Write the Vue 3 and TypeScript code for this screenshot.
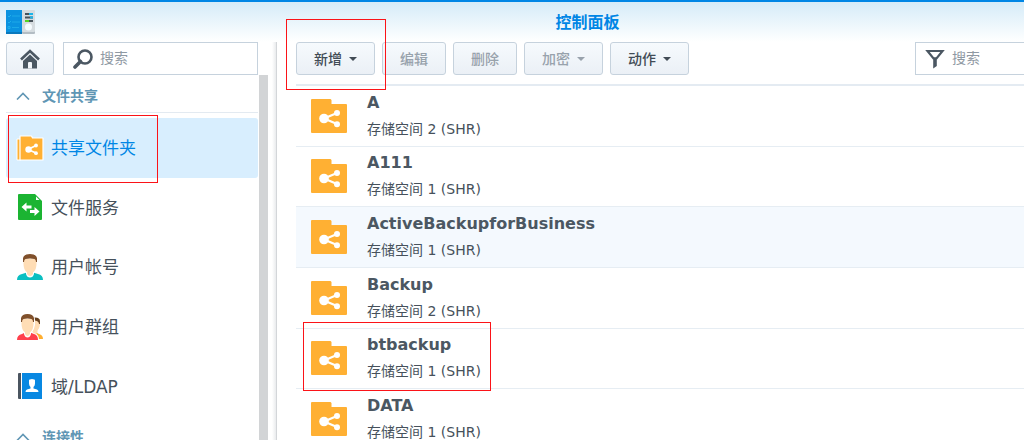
<script setup lang="ts">
import { ref } from 'vue'

interface NavItem {
  label: string
  icon: 'share' | 'file' | 'user' | 'group' | 'domain'
}

interface Folder {
  name: string
  volume: number
}

interface ToolButton {
  label: string
  menu: boolean
  disabled: boolean
}

const navItems: NavItem[] = [
  { label: '共享文件夹', icon: 'share' },
  { label: '文件服务', icon: 'file' },
  { label: '用户帐号', icon: 'user' },
  { label: '用户群组', icon: 'group' },
  { label: '域/LDAP', icon: 'domain' },
]

const buttons: ToolButton[] = [
  { label: '新增', menu: true, disabled: false },
  { label: '编辑', menu: false, disabled: true },
  { label: '删除', menu: false, disabled: true },
  { label: '加密', menu: true, disabled: true },
  { label: '动作', menu: true, disabled: false },
]

const folders: Folder[] = [
  { name: 'A', volume: 2 },
  { name: 'A111', volume: 1 },
  { name: 'ActiveBackupforBusiness', volume: 1 },
  { name: 'Backup', volume: 2 },
  { name: 'btbackup', volume: 1 },
  { name: 'DATA', volume: 1 },
]

const active = ref('共享文件夹')
const hovered = ref('ActiveBackupforBusiness')
const navQuery = ref('')
const listQuery = ref('')
</script>

<template>
  <div class="desktop">
    <div class="window">
      <header class="titlebar">
        <svg class="app-icon" viewBox="0 0 29 24" aria-hidden="true">
          <rect x="16" y="1" width="13" height="23" rx="1" fill="#b3bdc4" />
          <rect x="16" y="0" width="13" height="22" rx="1" fill="#d5dce0" />
          <rect x="0" y="1" width="16" height="23" fill="#0878bd" />
          <rect x="0" y="0" width="16" height="22" fill="#0a92e0" />
          <path d="M2 6l1 1 2-2M2 12l1 1 2-2M2 16.500h2v2h-2z" fill="none" stroke="#1eb0ec" stroke-width="1" />
          <path d="M6 6h8M6 12h8M6 17.500h7" stroke="#1ca9e8" stroke-width="1" />
          <path d="M19 4h8M19 7.500h8M19 11h8" stroke="#46525b" stroke-width="2" />
          <path d="M23 4h4M24 7.500h3" stroke="#18b4ea" stroke-width="2" />
          <path d="M19 11h4" stroke="#55d420" stroke-width="2" />
          <circle cx="22.500" cy="17" r="3.500" fill="#f4fbfe" />
        </svg>
        <h1>控制面板</h1>
      </header>

      <div class="body">
        <aside class="sidebar">
          <div class="side-tools">
            <button class="btn home" type="button" aria-label="主页">
              <svg viewBox="0 0 20 20" aria-hidden="true">
                <path d="M1 10.500L10 2l9 8.500" fill="none" stroke="#4b5762" stroke-width="2.600" />
                <path d="M10 5.500l7 6.500v7.500H3V12z" fill="#4b5762" />
                <path d="M8 19.500v-5.500q0-1 1-1h2q1 0 1 1v5.500z" fill="#f2f6fa" />
              </svg>
            </button>
            <label class="search">
              <svg viewBox="0 0 20 20" aria-hidden="true">
                <circle cx="12" cy="8" r="6.500" fill="none" stroke="#4b5762" stroke-width="2.600" />
                <path d="M7.500 12.500L2 18" stroke="#4b5762" stroke-width="3.600" stroke-linecap="round" />
              </svg>
              <input v-model="navQuery" type="text" placeholder="搜索" aria-label="搜索" />
            </label>
          </div>

          <div class="nav-scroll">
            <nav>
              <h2 class="section">
                <svg viewBox="0 0 14 8" aria-hidden="true"><path d="M1 7.500l6-6 6 6" /></svg>
                <span class="label">文件共享</span>
              </h2>
              <ul class="nav-list">
                <li v-for="item in navItems" :key="item.label">
                  <a href="#" :class="{ active: item.label === active }" @click.prevent="active = item.label">
                    <svg v-if="item.icon === 'share'" viewBox="0 0 28 28" aria-hidden="true">
                      <path d="M1 5h4v21H1z" fill="#ffb033" stroke="#fff" stroke-width="1" />
                      <path d="M4 2h11.500l1 2H27v22H4z" fill="#ffb033" stroke="#fff" stroke-width="1.200" stroke-linejoin="round" />
                      <path d="M20 11.500l-8 4 8 3.500" fill="none" stroke="#fff" stroke-width="1.800" />
                      <circle cx="12.500" cy="15.500" r="3.200" fill="#fff" />
                      <circle cx="20" cy="11.500" r="1.900" fill="#fff" />
                      <circle cx="20" cy="19.200" r="1.900" fill="#fff" />
                    </svg>
                    <svg v-else-if="item.icon === 'file'" viewBox="0 0 28 28" aria-hidden="true">
                      <path d="M3 1h16l7 7v18q0 1-1 1H3q-1 0-1-1V2q0-1 1-1z" fill="#1bb432" />
                      <path d="M20 3.500v3.500h3.500z" fill="#fff" />
                      <path d="M5.500 14l5-4.500v3h5v3h-5v3z" fill="#fff" />
                      <path d="M23.500 18.500l-5-4.500v3h-4.500v3h4.500v3z" fill="#fff" />
                    </svg>
                    <svg v-else-if="item.icon === 'user'" viewBox="0 0 28 28" aria-hidden="true">
                      <path d="M1 27q0-5 5-6l5-1.500h6l5 1.500q5 1 5 6z" fill="#0bbfc1" />
                      <path d="M10 18h8v3q-1 3.500-4 3.500T10 21z" fill="#fff" />
                      <path d="M11 17h6v4q-1 2-3 2t-3-2z" fill="#ffddb5" />
                      <path d="M7.500 6h13v5q0 5-3 8-3.500 2-7 0-3-3-3-8z" fill="#ffddb5" />
                      <path d="M7 9V5q1-4 7-4t7 4v4h-1q0-2.500-1.500-3-4.500-1-9 0Q8 6.500 8 9z" fill="#80502b" />
                    </svg>
                    <svg v-else-if="item.icon === 'group'" viewBox="0 0 28 28" aria-hidden="true">
                      <path d="M20 19.500l3 1.500q4 1 4 5h-5z" fill="#ffae30" />
                      <path d="M17 6h7v4q0 5-2.500 7.500v2l-2.500 2-3-3z" fill="#ffddb5" />
                      <path d="M18 4.500q6-.5 6 4V11h-1q0-3-4-3.500z" fill="#65401f" />
                      <path d="M5 7q0-6.500 7-6.500T19 7v5q-1 5-3 7.500l4 1.500q3 1 3 6" fill="#fff" />
                      <path d="M1 27q0-5 5-6l3-1.500h5l4 1.500q4 1 4 6z" fill="#ff404c" />
                      <path d="M8 18h7v3q-1 3.500-3.500 3.500T8 21z" fill="#fff" />
                      <path d="M9 17h5v4q-1 2-2.500 2T9 21z" fill="#ffddb5" />
                      <path d="M5.500 6h12v5q0 5-3 8-3 2-6 0-3-3-3-8z" fill="#ffddb5" />
                      <path d="M5 9V5q1-4 6.500-4T18 5v4h-1q0-2.500-1.500-3-4-1-8 0Q6 6.500 6 9z" fill="#80502b" />
                    </svg>
                    <svg v-else viewBox="0 0 28 28" aria-hidden="true">
                      <path d="M2 2q0-1 1-1h2v26H3q-1 0-1-1z" fill="#4b5560" />
                      <path d="M6 1h20v26H6z" fill="#0888e2" />
                      <path d="M13 8.500q0-1.500 3-1.500t3 1.500v3q0 2-1.500 3.500v1.500l3.500 1q1.500.5 1.500 2.500h-13q0-2 1.500-2.500l3.500-1V15Q13 13.500 13 11.500z" fill="#fff" />
                    </svg>
                    <span class="label">{{ item.label }}</span>
                  </a>
                </li>
              </ul>
              <h2 class="section">
                <svg viewBox="0 0 14 8" aria-hidden="true"><path d="M1 7.500l6-6 6 6" /></svg>
                <span class="label">连接性</span>
              </h2>
            </nav>
            <div class="thumb"></div>
          </div>
        </aside>

        <main class="content">
          <div class="toolbar">
            <button
              v-for="b in buttons"
              :key="b.label"
              class="btn"
              :class="{ menu: b.menu }"
              type="button"
              :disabled="b.disabled"
            >
              <span class="label">{{ b.label }}</span>
              <svg v-if="b.menu" viewBox="0 0 8 4" aria-hidden="true"><path d="M0 0h8L4 4z" /></svg>
            </button>
            <label class="search filter">
              <svg viewBox="0 0 20 20" aria-hidden="true">
                <path d="M2.500 2h15l-6 7.500h-3z" fill="none" stroke="#4b5762" stroke-width="2.200" />
                <path d="M8.200 8.500h3.600v8.500l-3.600 2.500z" fill="#4b5762" />
              </svg>
              <input v-model="listQuery" type="text" placeholder="搜索" aria-label="筛选" />
            </label>
          </div>

          <ul class="folders">
            <li
              v-for="f in folders"
              :key="f.name"
              :class="{ hover: f.name === hovered }"
              @mouseenter="hovered = f.name"
            >
              <svg viewBox="0 0 36 34" aria-hidden="true">
                <path d="M1 0h18.500l1 1v4H35q1 0 1 1v27q0 1-1 1H1q-1 0-1-1V1q0-1 1-1z" fill="#ffb033" />
                <path d="M26 14l-13 5.500L26 25" fill="none" stroke="#fff" stroke-width="2.200" />
                <circle cx="13" cy="19.500" r="4.800" fill="#fff" />
                <circle cx="26" cy="14" r="3" fill="#fff" />
                <circle cx="26" cy="25.200" r="3" fill="#fff" />
              </svg>
              <div class="text">
                <strong>{{ f.name }}</strong>
                <span>存储空间 {{ f.volume }} (SHR)</span>
              </div>
            </li>
          </ul>
        </main>
      </div>
    </div>

    <div class="mark mark-add"></div>
    <div class="mark mark-nav"></div>
    <div class="mark mark-folder"></div>
  </div>
</template>

<style>
body {
  margin: 0;
  overflow: hidden;
}
</style>

<style scoped>
* {
  box-sizing: border-box;
}

.desktop {
  position: relative;
  height: 100vh;
  overflow: hidden;
  background: #fff;
  color: #46515b;
  font-family: 'DejaVu Sans', 'Noto Sans CJK SC', sans-serif;
  font-size: 14px;
}

/* The window runs past the right edge of the screen. */
.window {
  display: flex;
  flex-direction: column;
  height: 100%;
  margin-right: -151px;
  border-top: 2px solid #0086e5;
  background: linear-gradient(#d5ebf8, #fff 40px);
}

.titlebar {
  display: grid;
  grid-template-columns: 1fr auto 1fr;
  align-items: center;
  flex: none;
  height: 40px;
  padding: 0 6px;
}

.app-icon {
  width: 29px;
  height: 24px;
}

h1 {
  margin: 0;
  padding-top: 2px;
  color: #0086e5;
  font-size: 16px;
  font-weight: 700;
  line-height: 24px;
}

.body {
  display: flex;
  flex: 1;
  min-height: 0;
}

.sidebar {
  display: flex;
  flex-direction: column;
  flex: none;
  width: 277px;
  padding-left: 6px;
  border-right: 1px solid #d3d6d9;
  background: linear-gradient(to left, #e9ebed, #fff 4px);
}

.side-tools {
  display: flex;
  gap: 9px;
  flex: none;
  width: 252px;
}

.label {
  padding-bottom: 2px;
}

.btn {
  display: flex;
  align-items: center;
  justify-content: center;
  gap: 7px;
  width: 64px;
  height: 33px;
  padding: 0;
  border: 1px solid #c6d2dd;
  border-radius: 3px;
  background: linear-gradient(#f6fafd, #ebf0f6);
  color: #414b55;
  font: inherit;
  font-weight: 500;
}

.btn.menu {
  width: 79px;
}

.btn.menu svg {
  width: 8px;
  height: 4px;
  fill: currentColor;
}

.btn:disabled {
  color: #98a2ac;
}

.btn.home {
  flex: none;
  width: 48px;
}

.home svg,
.search svg {
  flex: none;
  width: 20px;
  height: 20px;
}

.search {
  display: flex;
  align-items: center;
  gap: 7px;
  flex: 1;
  min-width: 0;
  height: 33px;
  padding: 0 9px;
  border: 1px solid #c6d2dd;
  background: #fff;
}

.search input {
  flex: 1;
  min-width: 0;
  height: 24px;
  padding: 0 0 2px;
  border: 0;
  outline: 0;
  background: transparent;
  color: #414b55;
  font: inherit;
}

.search input::placeholder {
  color: #8f99a3;
  opacity: 1;
}

.nav-scroll {
  display: flex;
  gap: 1px;
  flex: 1;
  min-height: 0;
  overflow: hidden;
}

nav {
  width: 252px;
}

.thumb {
  width: 9px;
  background: #d2d4d6;
}

.section {
  display: flex;
  align-items: center;
  gap: 12px;
  height: 38px;
  margin: 0 0 5px;
  padding: 4px 0 0 10px;
  border-bottom: 1px solid #e3eaf1;
  color: #6096b4;
  font-size: 14px;
  font-weight: 700;
}

.section svg {
  width: 14px;
  height: 8px;
  fill: none;
  stroke: #6096b4;
  stroke-width: 1.6;
}

ul {
  margin: 0;
  padding: 0;
  list-style: none;
}

.nav-list {
  display: grid;
  grid-auto-rows: 1fr;
  min-height: 298px;
}

.nav-list a {
  display: flex;
  align-items: center;
  gap: 7px;
  height: 100%;
  padding: 0 10px;
  border-radius: 3px;
  color: #46515b;
  font-size: 17px;
  text-decoration: none;
}

.nav-list a.active {
  background: #d8eefe;
  color: #0086e5;
}

.nav-list svg {
  flex: none;
  width: 28px;
  height: 28px;
}

.content {
  flex: 1;
  min-width: 0;
  padding-left: 19px;
  background: #fff;
}

.toolbar {
  display: flex;
  gap: 7px;
  padding: 0 10px 9px 0;
  border-bottom: 2px solid #e4ebf2;
}

.filter {
  flex: none;
  width: 250px;
  margin-left: auto;
}

.folders {
  display: grid;
  grid-auto-rows: 1fr;
  min-height: 364px;
}

.folders li {
  display: flex;
  align-items: center;
  gap: 20px;
  padding-left: 15px;
  border-bottom: 1px solid #e6edf3;
}

.folders li.hover {
  background: #f4f9fe;
}

.folders svg {
  width: 36px;
  height: 34px;
}

.text {
  display: flex;
  flex-direction: column;
  line-height: 27px;
}

.text strong {
  color: #4b5762;
  font-size: 16px;
}

/* Highlight frames drawn over the window. */
.mark {
  position: absolute;
  border: 1px solid #fb1318;
  pointer-events: none;
}

.mark-add {
  left: 286px;
  top: 19px;
  width: 100px;
  height: 71px;
}

.mark-nav {
  left: 8px;
  top: 115px;
  width: 150px;
  height: 68px;
}

.mark-folder {
  left: 303px;
  top: 322px;
  width: 188px;
  height: 69px;
}
</style>
